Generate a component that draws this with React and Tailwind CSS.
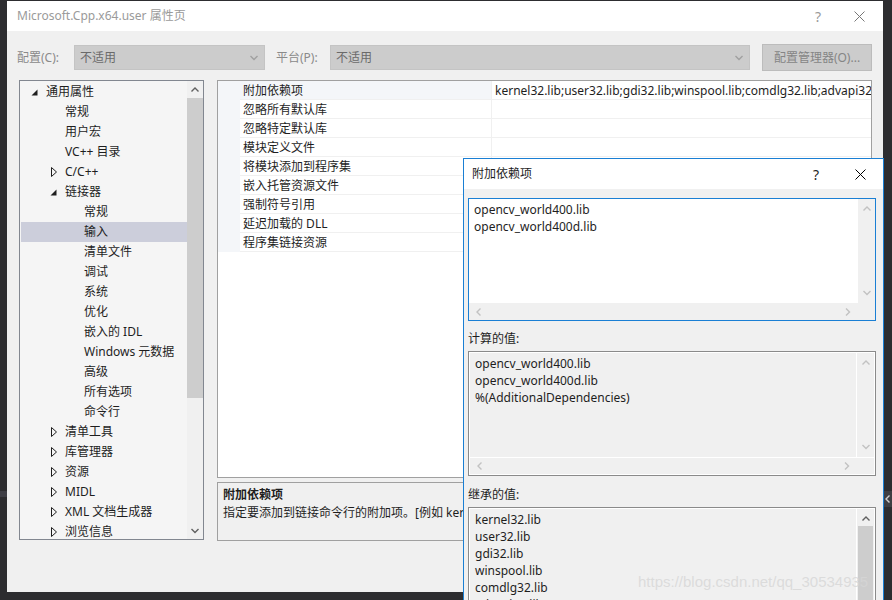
import React from 'react';

const treeItems = [
  { label: '通用属性', level: 0, expander: 'open' },
  { label: '常规', level: 1 },
  { label: '用户宏', level: 1 },
  { label: 'VC++ 目录', level: 1 },
  { label: 'C/C++', level: 1, expander: 'closed' },
  { label: '链接器', level: 1, expander: 'open' },
  { label: '常规', level: 2 },
  { label: '输入', level: 2, selected: true },
  { label: '清单文件', level: 2 },
  { label: '调试', level: 2 },
  { label: '系统', level: 2 },
  { label: '优化', level: 2 },
  { label: '嵌入的 IDL', level: 2 },
  { label: 'Windows 元数据', level: 2 },
  { label: '高级', level: 2 },
  { label: '所有选项', level: 2 },
  { label: '命令行', level: 2 },
  { label: '清单工具', level: 1, expander: 'closed' },
  { label: '库管理器', level: 1, expander: 'closed' },
  { label: '资源', level: 1, expander: 'closed' },
  { label: 'MIDL', level: 1, expander: 'closed' },
  { label: 'XML 文档生成器', level: 1, expander: 'closed' },
  { label: '浏览信息', level: 1, expander: 'closed' },
];

const indent = ['pl-[8px]', 'pl-[27px]', 'pl-[46px]'];

const properties = [
  '附加依赖项',
  '忽略所有默认库',
  '忽略特定默认库',
  '模块定义文件',
  '将模块添加到程序集',
  '嵌入托管资源文件',
  '强制符号引用',
  '延迟加载的 DLL',
  '程序集链接资源',
];

const inherited = ['kernel32.lib', 'user32.lib', 'gdi32.lib', 'winspool.lib', 'comdlg32.lib', 'advapi32.lib', 'shell32.lib'];

// small window-style glyphs
const CloseIcon = ({ color = '#000' }) => (
  <svg width="11" height="11" viewBox="0 0 11 11">
    <path d="M0.5 0.5 L10.5 10.5 M10.5 0.5 L0.5 10.5" stroke={color} strokeWidth="1" />
  </svg>
);

const Chevron = ({ dir, color = '#c2c2c2' }) => {
  const d = {
    up: 'M0.5 4.5 L4 1 L7.5 4.5',
    down: 'M0.5 1 L4 4.5 L7.5 1',
    left: 'M4.5 0.5 L1 4 L4.5 7.5',
    right: 'M1 0.5 L4.5 4 L1 7.5',
  }[dir];
  const vertical = dir === 'up' || dir === 'down';
  return (
    <svg width={vertical ? 8 : 6} height={vertical ? 6 : 8} viewBox={vertical ? '0 0 8 6' : '0 0 6 8'}>
      <path d={d} stroke={color} strokeWidth="1.4" fill="none" />
    </svg>
  );
};

const Expander = ({ type }) => {
  if (type === 'open') {
    return (
      <svg width="7" height="7" viewBox="0 0 7 7" className="ml-[2px]">
        <polygon points="6.5,0.5 6.5,6.5 0.5,6.5" fill="#1e1e1e" />
      </svg>
    );
  }
  if (type === 'closed') {
    return (
      <svg width="6" height="10" viewBox="0 0 6 10" className="ml-[3px]">
        <polygon points="0.5,0.5 5.5,5 0.5,9.5" fill="none" stroke="#1e1e1e" strokeWidth="1" />
      </svg>
    );
  }
  return null;
};

function ComboBox({ width }) {
  return (
    <div className={`${width} h-[25px] bg-[#cccccc] border border-[#c4c4c4] flex items-center justify-between pl-[5px] pr-[6px] text-[#6a6a6a]`}>
      <span>不适用</span>
      <Chevron dir="down" color="#a0a0a0" />
    </div>
  );
}

function TextArea({ lines, focused, thumb }) {
  return (
    <div className={`border ${focused ? 'border-[#1a7fd4] bg-white' : 'border-[#8a8a8a] bg-[#f0f0f0]'}`}>
      <div className={`flex flex-col ${focused ? '' : 'border border-white'}`}>
        <div className="flex">
          <div className={`flex-1 min-w-0 h-[104px] pl-[5px] pt-[2px] overflow-hidden ${focused ? 'bg-white' : 'border-r border-white'}`}>
            {lines.map((l, i) => (
              <div key={i} className="h-[17px] leading-[17px] whitespace-nowrap text-[#1e1e1e]">{l}</div>
            ))}
          </div>
          <div className="w-[17px] h-[104px] bg-[#f0f0f0] flex flex-col items-center pt-[7px]">
            <Chevron dir="up" color={thumb ? '#606060' : '#c2c2c2'} />
            {thumb ? (
              <div className="w-[15px] flex-1 bg-[#cdcdcd] mt-[4px]" />
            ) : (
              <>
                <div className="flex-1" />
                <div className="pb-[7px]"><Chevron dir="down" /></div>
              </>
            )}
          </div>
        </div>
        {!thumb && (
          <div className={`flex h-[17px] bg-[#f0f0f0] ${focused ? '' : 'border-t border-white'}`}>
            <div className="flex-1 flex items-center justify-between px-[7px]">
              <Chevron dir="left" />
              <Chevron dir="right" />
            </div>
            <div className="w-[17px]" />
          </div>
        )}
      </div>
    </div>
  );
}

export default function App() {
  return (
    <div className="relative w-[892px] h-[600px] bg-[#2d2d30] overflow-hidden pt-[1px] pl-[7px] text-[12px] font-['Noto_Sans','Noto_Sans_CJK_SC',sans-serif]">
      {/* background IDE leftovers */}
      <div className="absolute left-0 top-[491px] w-[7px] h-[6px] bg-[#3f3f46]" />
      <div className="absolute right-0 top-[491px] w-[8px] h-[16px] bg-[#3e3e42] flex items-center justify-center">
        <Chevron dir="left" color="#d0d0d0" />
      </div>

      {/* main property window */}
      <div className="w-[876px] h-[591px] bg-[#f0f0f0] flex flex-col">
        <div className="h-[30px] bg-white flex items-center pl-[10px] pr-[18px] text-[#9a9a9a]">
          <span className="flex-1">Microsoft.Cpp.x64.user 属性页</span>
          <span className="text-[14px] mr-[33px]">?</span>
          <CloseIcon color="#777777" />
        </div>

        <div className="h-[49px] flex items-start pt-[14px] pl-[10px] text-[#8a8a8a]">
          <span className="w-[57px] leading-[25px]">配置(C):</span>
          <ComboBox width="w-[191px]" />
          <span className="ml-[11px] w-[54px] leading-[25px]">平台(P):</span>
          <ComboBox width="w-[420px]" />
          <div className="ml-[12px] -mt-[1px] w-[110px] h-[27px] bg-[#cccccc] border border-[#bcbcbc] flex items-center justify-center text-[#858585]">
            配置管理器(O)...
          </div>
        </div>

        <div className="flex pl-[12px] h-[461px]">
          {/* category tree */}
          <div className="w-[185px] h-[460px] border border-[#828790] bg-[#f5f5f5] flex overflow-hidden">
            <div className="flex-1 flex flex-col pt-[1px]">
              {treeItems.map((item, i) => (
                <div
                  key={i}
                  className={`h-[20px] shrink-0 flex items-center ml-[1px] ${indent[item.level]} ${item.selected ? 'bg-[#cccedb]' : ''} text-[#1e1e1e]`}
                >
                  <div className="w-[17px] flex items-center">
                    <Expander type={item.expander} />
                  </div>
                  <span className="whitespace-nowrap">{item.label}</span>
                </div>
              ))}
            </div>
            <div className="w-[16px] bg-[#f0f0f0] flex flex-col items-center">
              <div className="h-[17px] flex items-center"><Chevron dir="up" color="#606060" /></div>
              <div className="w-[16px] h-[300px] bg-[#cdcdcd]" />
              <div className="flex-1" />
              <div className="h-[17px] flex items-center"><Chevron dir="down" color="#606060" /></div>
            </div>
          </div>

          <div className="ml-[13px] w-[655px] flex flex-col">
            {/* property grid */}
            <div className="h-[398px] border border-[#a0a0a0] bg-white flex flex-col overflow-hidden">
              {properties.map((p, i) => (
                <div key={i} className="h-[19px] flex text-[#1e1e1e] overflow-hidden">
                  <div className="w-[22px] shrink-0 bg-[#f4f6f9]" />
                  <div className={`w-[252px] shrink-0 pl-[3px] pt-[2px] border-b border-r border-[#f0f0f0] leading-[16px] ${i === 0 ? 'bg-[#f4f6f9]' : ''}`}>{p}</div>
                  <div className="flex-1 min-w-0 pl-[3px] pt-[2px] border-b border-[#f0f0f0] leading-[16px] whitespace-nowrap overflow-hidden">
                    {i === 0 ? 'kernel32.lib;user32.lib;gdi32.lib;winspool.lib;comdlg32.lib;advapi32.lib;shell32.lib;ole32.lib;oleaut32.lib;uuid.lib;odbc32.lib;odbccp32.lib;%(AdditionalDependencies)' : ''}
                  </div>
                </div>
              ))}
            </div>
            {/* description */}
            <div className="mt-[4px] h-[59px] border border-[#a0a0a0] bg-[#f0f0f0] pl-[5px] pt-[3px] text-[#1e1e1e] overflow-hidden">
              <div className="font-bold leading-[18px]">附加依赖项</div>
              <div className="leading-[18px] whitespace-nowrap">指定要添加到链接命令行的附加项。[例如 kernel32.lib]</div>
            </div>
          </div>
        </div>
      </div>

      {/* overlay: additional dependencies dialog */}
      <div className="absolute left-[463px] top-[158px] w-[421px] h-[460px] border border-[#1a7fd4] bg-[#f0f0f0] flex flex-col text-[#1e1e1e]">
        <div className="h-[30px] bg-white flex items-center pl-[8px] pr-[17px]">
          <span className="flex-1">附加依赖项</span>
          <span className="text-[14px] mr-[36px]">?</span>
          <CloseIcon />
        </div>
        <div className="pl-[4px] pr-[7px] pt-[9px] flex flex-col">
          <TextArea focused lines={['opencv_world400.lib', 'opencv_world400d.lib']} />
          <div className="h-[30px] flex items-end pb-[4px] leading-[17px]">计算的值:</div>
          <TextArea lines={['opencv_world400.lib', 'opencv_world400d.lib', '%(AdditionalDependencies)']} />
          <div className="h-[31px] flex items-end pb-[4px] leading-[17px]">继承的值:</div>
          <TextArea thumb lines={inherited} />
        </div>
      </div>

      {/* watermark */}
      <div className="absolute left-[638px] top-[571px] text-[15px] font-['Liberation_Sans',sans-serif] text-[#d6d6d6]/80 whitespace-nowrap">
        https://blog.csdn.net/qq_30534935
      </div>
    </div>
  );
}
